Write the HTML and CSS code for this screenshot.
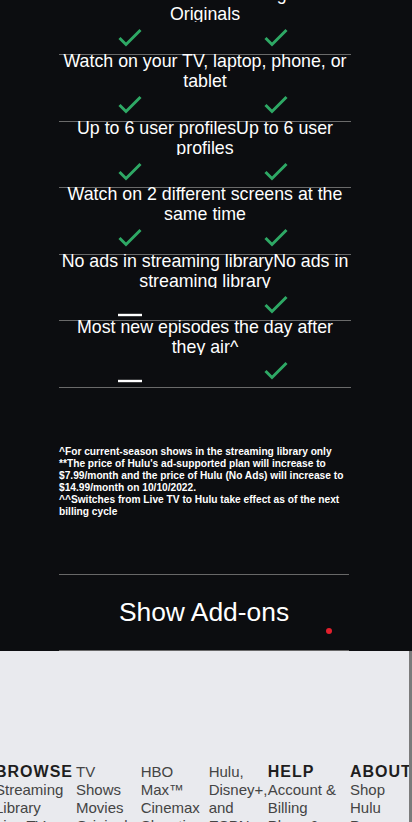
FILE: index.html
```html
<!DOCTYPE html>
<html lang="en">
<head>
<meta charset="utf-8">
<title>Hulu plans</title>
<link rel="stylesheet" href="styles.css">
</head>
<body>
<main class="page">
  <section class="compare">
    <div class="row">
      <div class="label">Shows and films including Hulu Originals</div>
      <div class="marks">
        <span class="cell"><svg class="icon" viewBox="0 0 24 22"><polyline class="check" points="1.5,10 8,16.5 22.5,2"/></svg></span>
        <span class="cell"><svg class="icon" viewBox="0 0 24 22"><polyline class="check" points="1.5,10 8,16.5 22.5,2"/></svg></span>
      </div>
    </div>
    <div class="row">
      <div class="label">Watch on your TV, laptop, phone, or tablet</div>
      <div class="marks">
        <span class="cell"><svg class="icon" viewBox="0 0 24 22"><polyline class="check" points="1.5,10 8,16.5 22.5,2"/></svg></span>
        <span class="cell"><svg class="icon" viewBox="0 0 24 22"><polyline class="check" points="1.5,10 8,16.5 22.5,2"/></svg></span>
      </div>
    </div>
    <div class="row">
      <div class="label">Up to 6 user profilesUp to 6 user profiles</div>
      <div class="marks">
        <span class="cell"><svg class="icon" viewBox="0 0 24 22"><polyline class="check" points="1.5,10 8,16.5 22.5,2"/></svg></span>
        <span class="cell"><svg class="icon" viewBox="0 0 24 22"><polyline class="check" points="1.5,10 8,16.5 22.5,2"/></svg></span>
      </div>
    </div>
    <div class="row">
      <div class="label">Watch on 2 different screens at the same time</div>
      <div class="marks">
        <span class="cell"><svg class="icon" viewBox="0 0 24 22"><polyline class="check" points="1.5,10 8,16.5 22.5,2"/></svg></span>
        <span class="cell"><svg class="icon" viewBox="0 0 24 22"><polyline class="check" points="1.5,10 8,16.5 22.5,2"/></svg></span>
      </div>
    </div>
    <div class="row">
      <div class="label">No ads in streaming libraryNo ads in streaming library</div>
      <div class="marks">
        <span class="cell"><svg class="icon" viewBox="0 0 24 22"><rect class="dash" x="0" y="18.8" width="24" height="2.4"/></svg></span>
        <span class="cell"><svg class="icon" viewBox="0 0 24 22"><polyline class="check" points="1.5,10 8,16.5 22.5,2"/></svg></span>
      </div>
    </div>
    <div class="row">
      <div class="label">Most new episodes the day after they air^</div>
      <div class="marks">
        <span class="cell"><svg class="icon" viewBox="0 0 24 22"><rect class="dash" x="0" y="18.8" width="24" height="2.4"/></svg></span>
        <span class="cell"><svg class="icon" viewBox="0 0 24 22"><polyline class="check" points="1.5,10 8,16.5 22.5,2"/></svg></span>
      </div>
    </div>
  </section>

  <div class="notes">
    <p>^For current-season shows in the streaming library only</p>
    <p>**The price of Hulu's ad-supported plan will increase to $7.99/month and the price of Hulu (No Ads) will increase to $14.99/month on 10/10/2022.</p>
    <p>^^Switches from Live TV to Hulu take effect as of the next billing cycle</p>
  </div>

  <div class="addons">
    <button class="addons-btn" type="button">Show Add-ons</button>
    <span class="dot"></span>
  </div>

  <footer class="footer">
    <div class="footer-cols">
      <div class="col c1">
        <h3 class="col-title">BROWSE</h3>
        <ul class="links">
          <li>Streaming Library</li>
          <li>Live TV</li>
          <li>Live News</li>
        </ul>
      </div>
      <div class="col c2">
        <ul class="links">
          <li>TV Shows</li>
          <li>Movies</li>
          <li>Originals</li>
        </ul>
      </div>
      <div class="col c3">
        <ul class="links">
          <li>HBO Max™</li>
          <li>Cinemax</li>
          <li>Showtime</li>
        </ul>
      </div>
      <div class="col c4">
        <ul class="links">
          <li>Hulu, Disney+, and ESPN+</li>
        </ul>
      </div>
      <div class="col c5">
        <h3 class="col-title">HELP</h3>
        <ul class="links">
          <li>Account &amp; Billing</li>
          <li>Plans &amp; Pricing</li>
        </ul>
      </div>
      <div class="col c6">
        <h3 class="col-title">ABOUT</h3>
        <ul class="links">
          <li>Shop Hulu</li>
          <li>Press</li>
        </ul>
      </div>
    </div>
  </footer>
</main>
</body>
</html>
```

FILE: styles.css
```css
html, body {
  margin: 0;
  padding: 0;
  overflow: hidden;
}

body {
  background: #0c0d10;
  color: #ffffff;
  font-family: "Liberation Sans", Arial, sans-serif;
}

.page {
  width: 412px;
}

/* comparison table */
.compare {
  margin: -12.6px 61px 0 59px;
}

.row {
  border-top: 1px solid #6a6a6a;
}

.row:last-child {
  border-bottom: 1px solid #6a6a6a;
}

.label {
  height: 37.5px;
  margin-top: -4px;
  overflow: hidden;
  text-align: center;
  font-size: 17.8px;
  line-height: 20px;
  color: #ffffff;
}

.marks {
  display: flex;
  height: 32.1px;
  margin-left: -2px;
}

.cell {
  width: 146px;
  display: flex;
  justify-content: center;
  align-items: flex-start;
  padding-top: 6.5px;
  box-sizing: border-box;
}

.icon {
  display: block;
  width: 24px;
  height: 22px;
}

.check {
  fill: none;
  stroke: #2ea865;
  stroke-width: 3;
  stroke-linecap: butt;
  stroke-linejoin: miter;
}

.dash {
  fill: #ffffff;
}

/* footnotes */
.notes {
  margin: 57.9px 61px 0 59px;
  font-size: 10.2px;
  line-height: 12px;
  font-weight: bold;
  color: #ffffff;
}

.notes p {
  margin: 0;
}

/* add-ons */
.addons {
  position: relative;
  margin: 56.5px 63px 0 59px;
  border-top: 1px solid #686868;
  border-bottom: 1px solid #686868;
  padding: 22px 0 23px;
  text-align: center;
}

.addons-btn {
  display: inline-block;
  margin: 0;
  padding: 0;
  border: 0;
  background: none;
  color: #ffffff;
  font-family: "Liberation Sans", Arial, sans-serif;
  font-size: 26.4px;
  line-height: 30px;
  vertical-align: top;
}

.dot {
  position: absolute;
  left: 267px;
  top: 53px;
  width: 6px;
  height: 6px;
  border-radius: 50%;
  background: #e3202d;
}

/* footer */
.footer {
  background: #e9eaee;
  border-right: 3px solid #7b7b7b;
  padding-top: 112px;
  height: 300px;
  overflow: hidden;
}

.footer-cols {
  display: flex;
  align-items: flex-start;
  margin-left: -5px;
}

.col {
  flex: none;
}

.c1 { width: 81px; }
.c2 { width: 64.7px; }
.c3 { width: 68px; }
.c4 { width: 59px; }
.c5 { width: 82.3px; }
.c6 { width: 70px; }

.col-title {
  margin: 0;
  font-size: 16px;
  font-weight: bold;
  letter-spacing: 1px;
  line-height: 18px;
  color: #1e1e1e;
}

.links {
  list-style: none;
  margin: 0;
  padding: 0;
}

.links li {
  font-size: 15px;
  line-height: 18px;
  color: #444444;
}
```
